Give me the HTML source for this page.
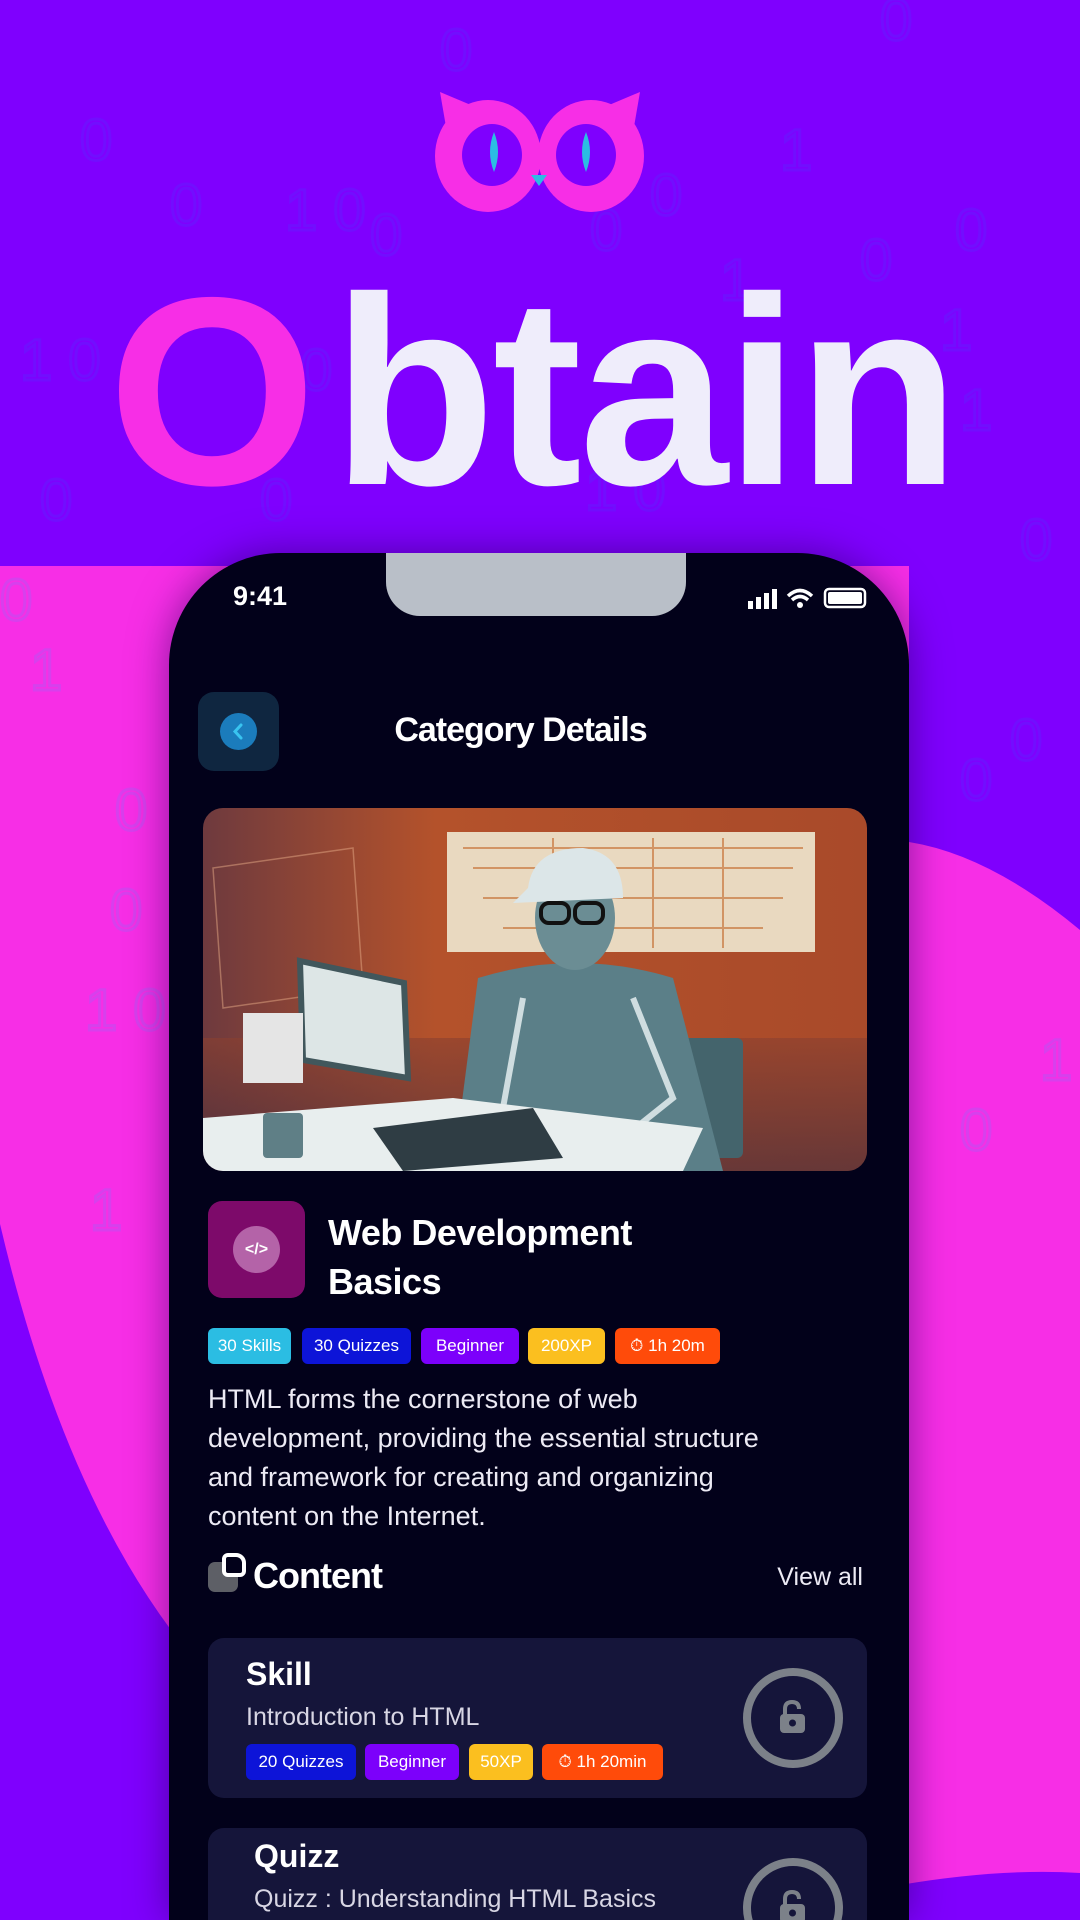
<!DOCTYPE html>
<html><head><meta charset="utf-8"><style>
*{margin:0;padding:0;box-sizing:border-box}
html,body{width:1080px;height:1920px;overflow:hidden}
body{position:relative;font-family:"Liberation Sans","DejaVu Sans",sans-serif;background:#f72ee6}
.abs{position:absolute}
.bg{position:absolute;left:0;top:0}
.phone{position:absolute;left:169px;top:553px;width:740px;height:1367px;background:#02011a;border-radius:112px 112px 0 0;box-shadow:0 0 40px rgba(40,0,90,.55);overflow:hidden}
.notch{position:absolute;left:217px;top:0;width:300px;height:63px;background:#b9bfc8;border-radius:0 0 34px 34px}
.w{color:#fff}
.badge{position:absolute;height:36px;border-radius:6px;color:#fff;font-size:17px;line-height:36px;text-align:center;white-space:nowrap}
.card{position:absolute;left:39px;width:659px;background:#15153a;border-radius:16px}
.lock{position:absolute;width:100px;height:100px;border:8px solid #7c8189;border-radius:50%}
</style></head><body>
<svg class="bg" width="1080" height="1920" viewBox="0 0 1080 1920">
<path d="M0 0H1080V930Q990 855 909 842V566H0Z" fill="#7f00fe"/>
<path d="M0 1224Q60 1480 171 1630V1920H0Z" fill="#7f00fe"/>
<path d="M900 1885Q1000 1868 1080 1873V1920H900Z" fill="#7f00fe"/>
<g font-family="Liberation Sans,sans-serif" font-size="58" fill="none" stroke="#6a18ff" stroke-width="3" opacity=".6">
<text x="440" y="70">0</text><text x="880" y="40">0</text><text x="80" y="160">0</text><text x="170" y="225">0</text><text x="285" y="230">1 0</text><text x="370" y="255">0</text><text x="590" y="250">0</text><text x="650" y="215">0</text><text x="720" y="300">1</text><text x="780" y="170">1</text><text x="860" y="280">0</text><text x="940" y="350">1</text><text x="955" y="250">0</text><text x="300" y="390">0</text><text x="20" y="380">1 0</text><text x="40" y="520">0</text><text x="585" y="510">1 0</text><text x="260" y="520">0</text><text x="960" y="430">1</text><text x="1020" y="560">0</text><text x="960" y="800">0</text><text x="1010" y="760">0</text>
</g>
<g font-family="Liberation Sans,sans-serif" font-size="58" fill="none" stroke="#c24cf0" stroke-width="3" opacity=".6">
<text x="0" y="620">0</text><text x="30" y="690">1</text><text x="115" y="830">0</text><text x="110" y="930">0</text><text x="85" y="1030">1 0</text><text x="90" y="1230">1</text><text x="960" y="1150">0</text><text x="1040" y="1080">1</text>
</g>
<g fill="#f72ee6">
<path d="M440 92L478 108 450 150Z"/><path d="M640 92L602 108 630 150Z"/>
<ellipse cx="488" cy="156" rx="53" ry="56"/><ellipse cx="591" cy="156" rx="53" ry="56"/>
</g>
<ellipse cx="492" cy="155" rx="30" ry="31" fill="#7f00fe"/><ellipse cx="586" cy="155" rx="30" ry="31" fill="#7f00fe"/>
<path d="M494 132Q502 152 494 172Q486 152 494 132Z" fill="#2bbde3"/>
<path d="M586 132Q594 152 586 172Q578 152 586 132Z" fill="#2bbde3"/>
<path d="M531 175H547L539 186Z" fill="#2bbde3"/>
<text x="108" y="484" font-family="Liberation Sans,sans-serif" font-weight="bold" font-size="268" fill="#f72ee6">O</text>
<text x="332" y="484" font-family="Liberation Sans,sans-serif" font-weight="bold" font-size="268" fill="#efedfb" letter-spacing="-3">btain</text>
</svg>

<div class="phone">
 <div class="notch"></div>
 <div class="abs w" style="left:64px;top:28px;font-size:27px;font-weight:bold">9:41</div>
 <svg class="abs" style="left:577px;top:32px" width="130" height="28" viewBox="0 0 130 28">
  <rect x="2" y="16" width="5" height="8" fill="#fff"/><rect x="10" y="12" width="5" height="12" fill="#fff"/><rect x="18" y="8" width="5" height="16" fill="#fff"/><rect x="26" y="4" width="5" height="20" fill="#fff"/>
  <path d="M42 11Q54 0 66 11M46 15Q54 8 62 15" stroke="#fff" stroke-width="3.5" fill="none"/><circle cx="54" cy="20" r="3" fill="#fff"/>
  <rect x="79" y="4" width="40" height="18" rx="4" fill="none" stroke="#fff" stroke-width="2.5"/><rect x="82" y="7" width="34" height="12" rx="2" fill="#fff"/>
 </svg>
 <div class="abs" style="left:29px;top:139px;width:81px;height:79px;background:#0f2640;border-radius:16px"></div>
 <div class="abs" style="left:51px;top:160px;width:37px;height:37px;background:#1b7cbc;border-radius:50%"></div>
 <svg class="abs" style="left:51px;top:160px" width="37" height="37"><path d="M21 12L15 18.5 21 25" stroke="#39c4f0" stroke-width="3" fill="none" stroke-linecap="round"/></svg>
 <div class="abs w" style="left:0;width:703px;top:158px;text-align:center;font-size:34px;font-weight:bold;letter-spacing:-1px">Category Details</div>
 <svg class="abs" style="left:34px;top:255px;border-radius:20px" width="664" height="363" viewBox="0 0 664 363">
  <defs><linearGradient id="g" x1="0" x2="1"><stop offset="0" stop-color="#6e3a3e"/><stop offset=".35" stop-color="#b4522b"/><stop offset="1" stop-color="#a94a2a"/></linearGradient>
  <linearGradient id="d" x1="0" y1="0" x2="0" y2="1"><stop offset="0" stop-color="#8a4030"/><stop offset="1" stop-color="#3a2a40"/></linearGradient></defs>
  <rect width="664" height="363" fill="url(#g)"/>
  <rect x="0" y="230" width="664" height="133" fill="url(#d)" opacity=".6"/>
  <rect x="244" y="24" width="368" height="120" fill="#e9d9c0"/>
  <path d="M260 40H600M270 60H590M280 90H580M300 120H560M350 30V140M450 30V140M520 30V140" stroke="#c8773e" stroke-width="2" opacity=".7"/>
  <path d="M10 60L150 40 160 180 20 200Z" fill="none" stroke="#e4a884" stroke-width="1.5" opacity=".5"/>
  <rect x="460" y="230" width="80" height="120" rx="6" fill="#44646c"/>
  <path d="M275 170Q372 140 470 170L520 363H250Z" fill="#5b7f88"/>
  <path d="M320 190L300 300 340 320M430 190L470 290 420 330" stroke="#cfdde0" stroke-width="6" fill="none"/>
  <ellipse cx="372" cy="110" rx="40" ry="52" fill="#6b8d94"/>
  <path d="M325 80Q330 40 380 40Q420 45 420 90L310 95Z" fill="#dce6e8"/>
  <rect x="338" y="95" width="28" height="20" rx="8" fill="none" stroke="#111" stroke-width="4"/><rect x="372" y="95" width="28" height="20" rx="8" fill="none" stroke="#111" stroke-width="4"/>
  <path d="M97 153L201 175 205 270 100 252Z" fill="#dde6e6" stroke="#41575c" stroke-width="6"/>
  <rect x="40" y="205" width="60" height="70" fill="#e5e5e5"/>
  <path d="M0 310L250 290 500 320 480 363H0Z" fill="#e8eeee"/>
  <path d="M170 320L330 300 360 350 200 363Z" fill="#2f3d44"/>
  <rect x="60" y="305" width="40" height="45" rx="4" fill="#5f7f86"/>
 </svg>
 <div class="abs" style="left:39px;top:648px;width:97px;height:97px;background:#7d0a6a;border-radius:14px"></div>
 <div class="abs" style="left:64px;top:673px;width:47px;height:47px;background:#b463a8;border-radius:50%;color:#fff;font-size:16px;font-weight:bold;text-align:center;line-height:47px">&lt;/&gt;</div>
 <div class="abs w" style="left:159px;top:655px;font-size:36px;font-weight:bold;line-height:49px;letter-spacing:-.5px">Web Development<br>Basics</div>
 <div class="badge" style="left:39px;top:775px;width:83px;background:#2bbde3">30 Skills</div>
 <div class="badge" style="left:133px;top:775px;width:109px;background:#0d14d8">30 Quizzes</div>
 <div class="badge" style="left:252px;top:775px;width:98px;background:#7c00fb">Beginner</div>
 <div class="badge" style="left:359px;top:775px;width:77px;background:#fbbf1f">200XP</div>
 <div class="badge" style="left:446px;top:775px;width:105px;background:#ff4b0a">⏱ 1h 20m</div>
 <div class="abs" style="left:39px;top:827px;width:680px;color:#eceaf4;font-size:27px;line-height:39px;white-space:nowrap">HTML forms the cornerstone of web<br>development, providing the essential structure<br>and framework for creating and organizing<br>content on the Internet.</div>
 <div class="abs" style="left:39px;top:1009px;width:30px;height:30px;background:#5d5f66;border-radius:7px"></div>
 <div class="abs" style="left:53px;top:1000px;width:24px;height:24px;border:4px solid #fff;border-radius:6px 10px 6px 6px;background:#02011a"></div>
 <div class="abs w" style="left:84px;top:1002px;font-size:36px;font-weight:bold;letter-spacing:-1px">Content</div>
 <div class="abs" style="right:46px;top:1010px;color:#eceaf4;font-size:25px">View all</div>
 <div class="card" style="top:1085px;height:160px">
  <div class="abs w" style="left:38px;top:18px;font-size:32px;font-weight:bold">Skill</div>
  <div class="abs" style="left:38px;top:65px;color:#d8d6e4;font-size:25px">Introduction to HTML</div>
  <div class="badge" style="left:38px;top:106px;width:110px;background:#0d14d8">20 Quizzes</div>
  <div class="badge" style="left:157px;top:106px;width:94px;background:#7c00fb">Beginner</div>
  <div class="badge" style="left:261px;top:106px;width:64px;background:#fbbf1f">50XP</div>
  <div class="badge" style="left:334px;top:106px;width:121px;background:#ff4b0a">⏱ 1h 20min</div>
  <div class="lock" style="left:535px;top:30px"></div>
  <svg class="abs" style="left:560px;top:55px" width="50" height="50"><path d="M17 22V16Q17 9 24 9Q31 9 31 16" stroke="#7c8189" stroke-width="4" fill="none"/><rect x="12" y="21" width="25" height="19" rx="4" fill="#7c8189"/><circle cx="24.5" cy="30" r="3.5" fill="#15153a"/></svg>
 </div>
 <div class="card" style="top:1275px;height:200px">
  <div class="abs w" style="left:46px;top:10px;font-size:32px;font-weight:bold">Quizz</div>
  <div class="abs" style="left:46px;top:57px;color:#d8d6e4;font-size:25px">Quizz : Understanding HTML Basics</div>
  <div class="lock" style="left:535px;top:30px"></div>
  <svg class="abs" style="left:560px;top:55px" width="50" height="50"><path d="M17 22V16Q17 9 24 9Q31 9 31 16" stroke="#7c8189" stroke-width="4" fill="none"/><rect x="12" y="21" width="25" height="19" rx="4" fill="#7c8189"/><circle cx="24.5" cy="30" r="3.5" fill="#15153a"/></svg>
 </div>
</div>
</body></html>
